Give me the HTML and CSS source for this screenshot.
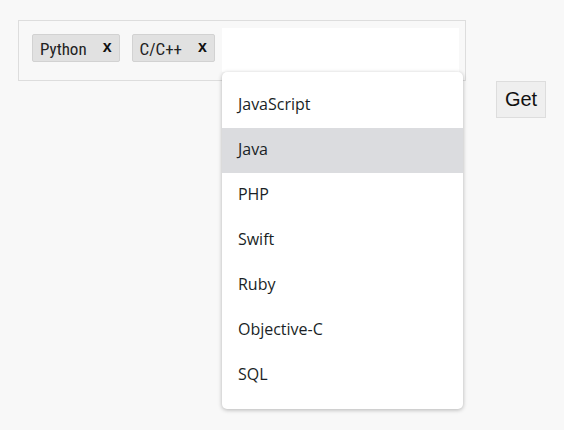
FILE: index.html
```html
<!DOCTYPE html>
<html>
<head>
<meta charset="utf-8">
<link rel="stylesheet" href="styles.css">
</head>
<body>
<div class="row">
  <div class="box">
    <span class="tag"><span class="tag-text">Python</span><span class="tag-x">x</span></span>
    <span class="tag"><span class="tag-text">C/C++</span><span class="tag-x">x</span></span>
    <div class="field">
      <div class="input"></div>
      <ul class="menu">
        <li>JavaScript</li>
        <li class="active">Java</li>
        <li>PHP</li>
        <li>Swift</li>
        <li>Ruby</li>
        <li>Objective-C</li>
        <li>SQL</li>
      </ul>
    </div>
  </div>
  <button class="get">Get</button>
</div>
</body>
</html>
```

FILE: styles.css
```css
html, body {
  margin: 0;
  padding: 0;
  background: #f8f8f8;
}
body {
  min-height: 430px;
  font-family: "Liberation Sans", Arial, sans-serif;
}
.row {
  display: flex;
  align-items: flex-start;
  padding: 20px 0 0 18px;
}
.box {
  display: flex;
  align-items: flex-start;
  width: 448px;
  height: 61px;
  box-sizing: border-box;
  border: 1px solid #dddddd;
  background: #f8f8f8;
  padding: 7px 6px 0 13px;
}
.tag {
  display: flex;
  align-items: center;
  height: 28px;
  box-sizing: border-box;
  margin-top: 6px;
  margin-right: 12px;
  padding: 0 7px 0 7px;
  background: #e1e1e1;
  border: 1px solid #d2d2d2;
  border-radius: 2px;
  color: #222;
}
.tag + .tag {
  margin-right: 7px;
}
.tag-text {
  font-family: Roboto, "Liberation Sans", sans-serif;
  font-size: 17px;
  font-stretch: 80%;
  line-height: 20px;
  margin-top: 1px;
}
.tag-x {
  font-family: "Liberation Sans", Arial, sans-serif;
  font-weight: bold;
  font-size: 16px;
  line-height: 16px;
  margin-left: 16px;
  margin-top: -3px;
  color: #111;
}
.field {
  position: relative;
  flex: 1;
}
.input {
  height: 44px;
  background: #fff;
}
.menu {
  position: absolute;
  top: 100%;
  left: 0;
  width: 241px;
  margin: 0;
  padding: 11px 0;
  list-style: none;
  background: #fff;
  border-radius: 5px;
  box-shadow: 0 1px 4px rgba(0, 0, 0, 0.28);
  z-index: 2;
}
.menu li {
  height: 45px;
  line-height: 43px;
  padding-left: 16px;
  font-family: "Open Sans", "Noto Sans", sans-serif;
  font-size: 16px;
  color: #1a1f26;
}
.menu li.active {
  background: #dbdcdf;
}
.get {
  margin: 61px 0 0 30px;
  width: 50px;
  height: 37px;
  padding: 0;
  background: #efefef;
  border: 1px solid #dddddd;
  border-radius: 0;
  font-family: "Liberation Sans", Arial, sans-serif;
  font-size: 20px;
  color: #111;
}
```
